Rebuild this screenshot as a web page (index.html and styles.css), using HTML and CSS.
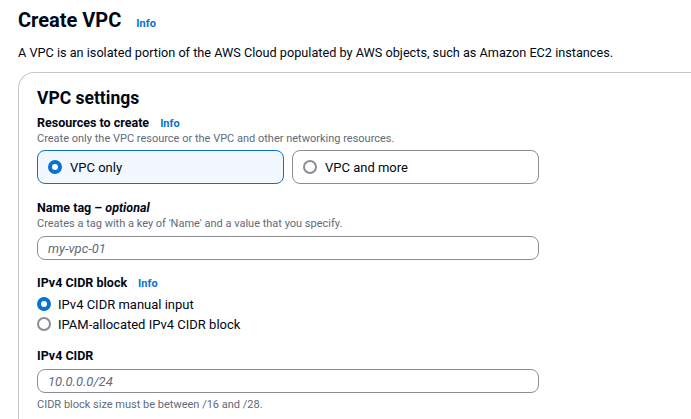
FILE: index.html
```html
<!DOCTYPE html>
<html>
<head>
<meta charset="utf-8">
<link rel="stylesheet" href="styles.css">
</head>
<body>
<div class="page">
  <header class="head">
    <h1 class="title">Create VPC</h1>
    <a class="info info-lg">Info</a>
  </header>
  <p class="desc">A VPC is an isolated portion of the AWS Cloud populated by AWS objects, such as Amazon EC2 instances.</p>
  <section class="card">
    <h2 class="card-title">VPC settings</h2>

    <div class="field first">
      <div class="label-row"><span class="label">Resources to create</span><a class="info">Info</a></div>
      <div class="hint">Create only the VPC resource or the VPC and other networking resources.</div>
      <div class="tiles">
        <div class="tile selected"><span class="radio on"></span><span class="tile-text">VPC only</span></div>
        <div class="tile"><span class="radio"></span><span class="tile-text">VPC and more</span></div>
      </div>
    </div>

    <div class="field">
      <div class="label-row"><span class="label">Name tag – <em>optional</em></span></div>
      <div class="hint">Creates a tag with a key of 'Name' and a value that you specify.</div>
      <div class="input"><span class="placeholder">my-vpc-01</span></div>
    </div>

    <div class="field gap15">
      <div class="label-row"><span class="label">IPv4 CIDR block</span><a class="info">Info</a></div>
      <div class="radios">
        <div class="radio-row"><span class="radio on"></span><span>IPv4 CIDR manual input</span></div>
        <div class="radio-row"><span class="radio"></span><span>IPAM-allocated IPv4 CIDR block</span></div>
      </div>
    </div>

    <div class="field gap14">
      <div class="label-row"><span class="label">IPv4 CIDR</span></div>
      <div class="input cidr"><span class="placeholder">10.0.0.0/24</span></div>
      <div class="hint after">CIDR block size must be between /16 and /28.</div>
    </div>
  </section>
</div>
</body>
</html>
```

FILE: styles.css
```css
* { box-sizing: border-box; }
html, body { margin: 0; padding: 0; background: #ffffff; }
body {
  font-family: Roboto, "Open Sans", Arial, sans-serif;
  color: #000716;
  overflow: hidden;
}
.page {
  height: 419px;
  padding: 6px 0 0 18px;
  display: flex;
  flex-direction: column;
}
.head { display: flex; align-items: baseline; gap: 15px; height: 28px; flex: none; }
.title { margin: 0; font-size: 20px; line-height: 28px; font-weight: 700; }
.info { color: #0972d3; font-size: 11px; font-weight: 700; }
.desc { margin: 9px 0 0; font-size: 12.7px; line-height: 20px; flex: none; }
.card {
  margin-top: 9px;
  flex: 1;
  border: 1px solid #c6c6cd;
  border-right: none;
  border-bottom: none;
  border-radius: 16px 0 0 0;
  padding: 13px 0 0 18px;
}
.card-title { margin: 0; font-size: 17.5px; line-height: 24px; font-weight: 700; }
.field { width: 502px; margin-top: 16px; }
.field.first { margin-top: 5px; }
.field.gap15 { margin-top: 15px; }
.field.gap14 { margin-top: 14px; }
.label-row { display: flex; align-items: baseline; gap: 11px; height: 16px; }
.label { font-size: 12.5px; font-weight: 700; line-height: 16px; }
.label em { font-style: italic; }
.hint { font-size: 11px; line-height: 16px; color: #5f6b7a; }
.hint.after { margin-top: 4px; }
.tiles { display: flex; gap: 8px; margin-top: 3px; }
.tile {
  flex: 1;
  height: 34px;
  border: 1px solid #8c8c94;
  border-radius: 8px;
  display: flex;
  align-items: center;
  padding-left: 10px;
  gap: 8px;
  font-size: 13px;
}
.tile.selected { border-color: #0972d3; background: #f2f8fd; }
.radio {
  width: 14px; height: 14px;
  border-radius: 50%;
  border: 2px solid #8c8c94;
  background: #fff;
  flex: none;
}
.radio.on { border: 4px solid #0972d3; }
.input {
  margin-top: 4px;
  height: 24px;
  border: 1px solid #8c8c94;
  border-radius: 8px;
  display: flex;
  align-items: center;
  padding-left: 10px;
}
.input.cidr { margin-top: 5px; }
.placeholder { font-size: 13px; font-style: italic; color: #5f6b7a; }
.radios { margin-top: 3px; display: flex; flex-direction: column; }
.radio-row { display: flex; align-items: center; gap: 7px; height: 20px; font-size: 13px; }
```
